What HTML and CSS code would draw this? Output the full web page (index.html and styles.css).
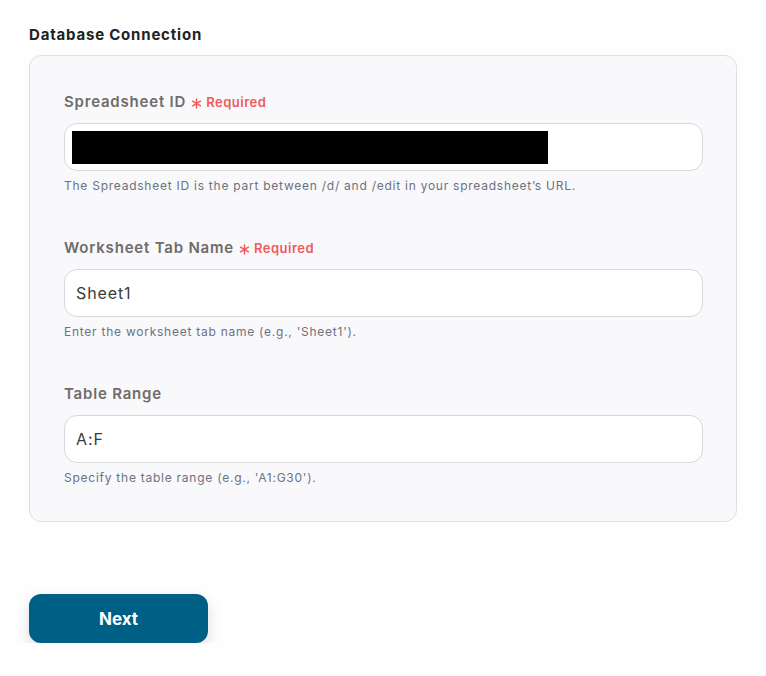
FILE: index.html
```html
<!DOCTYPE html>
<html lang="en">
<head>
<meta charset="utf-8">
<link rel="stylesheet" href="styles.css">
</head>
<body>
<div class="page">
  <h2 class="section-title">Database Connection</h2>
  <div class="card">
    <div class="field">
      <label class="label">Spreadsheet ID <span class="req"><svg class="star" viewBox="0 0 12 12" width="11" height="11"><g stroke="#f05a5a" stroke-width="1.6" stroke-linecap="round"><line x1="6" y1="1" x2="6" y2="11"/><line x1="1.7" y1="3.5" x2="10.3" y2="8.5"/><line x1="1.7" y1="8.5" x2="10.3" y2="3.5"/></g></svg>Required</span></label>
      <div class="input"><span class="redact"></span></div>
      <p class="help">The Spreadsheet ID is the part between /d/ and /edit in your spreadsheet’s URL.</p>
    </div>
    <div class="field">
      <label class="label">Worksheet Tab Name <span class="req"><svg class="star" viewBox="0 0 12 12" width="11" height="11"><g stroke="#f05a5a" stroke-width="1.6" stroke-linecap="round"><line x1="6" y1="1" x2="6" y2="11"/><line x1="1.7" y1="3.5" x2="10.3" y2="8.5"/><line x1="1.7" y1="8.5" x2="10.3" y2="3.5"/></g></svg>Required</span></label>
      <div class="input">Sheet1</div>
      <p class="help">Enter the worksheet tab name (e.g., 'Sheet1').</p>
    </div>
    <div class="field">
      <label class="label">Table Range</label>
      <div class="input">A:F</div>
      <p class="help">Specify the table range (e.g., 'A1:G30').</p>
    </div>
  </div>
  <button class="next">Next</button>
</div>
</body>
</html>
```
FILE: styles.css
```css
* { box-sizing: border-box; }
html, body { margin: 0; padding: 0; background: #fefefe; }
body { font-family: Inter, "Noto Sans", sans-serif; }
.page { padding: 25px 29px 0 29px; width: 766px; }
.section-title {
  margin: 0;
  font-size: 15px;
  line-height: 20px;
  font-weight: 700;
  color: #222;
  letter-spacing: 0.8px;
}
.card {
  margin-top: 10px;
  width: 708px;
  background: #f9f8fb;
  border: 1px solid #e1dfe6;
  border-radius: 12px;
  padding: 36px 33px 35px 34px;
  display: flex;
  flex-direction: column;
  gap: 44px;
}
.field { display: flex; flex-direction: column; }
.label {
  font-size: 15px;
  line-height: 20px;
  font-weight: 600;
  color: #6e6b6b;
  letter-spacing: 0.8px;
  display: flex;
  align-items: center;
  gap: 5px;
}
.req {
  color: #f05a5a;
  font-size: 13px;
  font-weight: 600;
  letter-spacing: 0.5px;
  display: inline-flex;
  align-items: center;
  gap: 4px;
}
.star { display: block; position: relative; top: 1px; }
.input {
  margin-top: 11px;
  height: 48px;
  background: #fff;
  border: 1px solid #d8d6de;
  border-radius: 13px;
  padding: 0 11px;
  display: flex;
  align-items: center;
  font-size: 16px;
  letter-spacing: 0.9px;
  color: #3a3a3a;
}
.redact {
  display: block;
  width: 476px;
  height: 33px;
  background: #000;
  margin-left: -4px;
}
.help {
  margin: 7px 0 0 0;
  font-size: 12px;
  line-height: 16px;
  color: #6b7280;
  letter-spacing: 0.75px;
}
.next {
  display: block;
  margin-top: 72px;
  width: 179px;
  height: 49px;
  border: none;
  border-radius: 12px;
  background: #005f85;
  color: #fff;
  font-family: Inter, "Noto Sans", sans-serif;
  font-size: 17px;
  font-weight: 700;
  box-shadow: 0 6px 14px rgba(60, 70, 100, 0.18);
}
```
